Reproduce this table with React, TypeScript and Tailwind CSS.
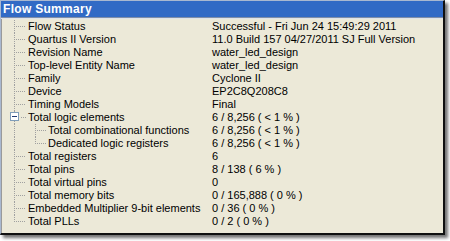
type Row = {
  label: string;
  value: string;
  level: 0 | 1;
  expander?: boolean;
  last?: boolean;
  childLast?: boolean;
};

const rows: Row[] = [
  { label: "Flow Status", value: "Successful - Fri Jun 24 15:49:29 2011", level: 0 },
  { label: "Quartus II Version", value: "11.0 Build 157 04/27/2011 SJ Full Version", level: 0 },
  { label: "Revision Name", value: "water_led_design", level: 0 },
  { label: "Top-level Entity Name", value: "water_led_design", level: 0 },
  { label: "Family", value: "Cyclone II", level: 0 },
  { label: "Device", value: "EP2C8Q208C8", level: 0 },
  { label: "Timing Models", value: "Final", level: 0 },
  { label: "Total logic elements", value: "6 / 8,256 ( < 1 % )", level: 0, expander: true },
  { label: "Total combinational functions", value: "6 / 8,256 ( < 1 % )", level: 1 },
  { label: "Dedicated logic registers", value: "6 / 8,256 ( < 1 % )", level: 1, childLast: true },
  { label: "Total registers", value: "6", level: 0 },
  { label: "Total pins", value: "8 / 138 ( 6 % )", level: 0 },
  { label: "Total virtual pins", value: "0", level: 0 },
  { label: "Total memory bits", value: "0 / 165,888 ( 0 % )", level: 0 },
  { label: "Embedded Multiplier 9-bit elements", value: "0 / 36 ( 0 % )", level: 0 },
  { label: "Total PLLs", value: "0 / 2 ( 0 % )", level: 0, last: true },
];

const DOT = "#a0a0a0";

// dotted tree connectors for one 13px row
function TreeGutter({ row }: { row: Row }) {
  const width = row.level === 0 ? 25 : 45;
  return (
    <svg width={width} height={13} className="shrink-0" shapeRendering="crispEdges">
      {/* main trunk */}
      {Array.from({ length: 7 }).map((_, i) => {
        const y = i * 2;
        if (row.last && y > 6) return null;
        return <rect key={"t" + i} x={12} y={y} width={1} height={1} fill={DOT} />;
      })}
      {row.level === 0 && !row.expander &&
        Array.from({ length: 5 }).map((_, i) => (
          <rect key={"h" + i} x={14 + i * 2} y={6} width={1} height={1} fill={DOT} />
        ))}
      {row.expander && (
        <>
          <rect x={8.5} y={1.5} width={8} height={8} fill="#ffffff" stroke="#7f9db9" />
          <rect x={10} y={5} width={5} height={1} fill="#1f3a73" />
          <rect x={19} y={6} width={1} height={1} fill={DOT} />
          <rect x={21} y={6} width={1} height={1} fill={DOT} />
          <rect x={23} y={6} width={1} height={1} fill={DOT} />
          {Array.from({ length: 2 }).map((_, i) => (
            <rect key={"e" + i} x={33} y={10 + i * 2} width={1} height={1} fill={DOT} />
          ))}
        </>
      )}
      {row.level === 1 && (
        <>
          {Array.from({ length: 7 }).map((_, i) => {
            const y = i * 2;
            if (row.childLast && y > 6) return null;
            return <rect key={"c" + i} x={33} y={y} width={1} height={1} fill={DOT} />;
          })}
          {Array.from({ length: 5 }).map((_, i) => (
            <rect key={"ch" + i} x={35 + i * 2} y={6} width={1} height={1} fill={DOT} />
          ))}
        </>
      )}
    </svg>
  );
}

export default function App() {
  return (
    <div className="w-[450px] h-[241px] bg-white" style={{ fontFamily: '"Liberation Sans", Arial, sans-serif' }}>
      <div className="w-[445px] h-[235px] flex flex-col border-l border-t border-[#a9b8d0] border-r-2 border-b-2 border-r-[#111] border-b-[#111] shadow-[3px_3px_3px_rgba(0,0,0,0.55)]">
        <div className="h-[16px] bg-[#316ac5] text-white font-bold text-[12px] leading-[16px] pl-[2px] tracking-[0.3px]">
          Flow Summary
        </div>
        <div className="h-[1px] bg-[#7f8ea8]" />
        <div className="h-[1px] bg-[#dfe3ea]" />
        <div className="flex-1 bg-[#ece9d8] border-l border-[#9a9a9a] pt-[1px]">
          {rows.map((row) => (
            <div key={row.label} className="grid grid-cols-[210px_1fr] h-[13px] items-center text-[11px] leading-[13px] text-black">
              <div className="flex items-center">
                <TreeGutter row={row} />
                <div className="whitespace-nowrap pl-[1px]">{row.label}</div>
              </div>
              <div className="whitespace-nowrap">{row.value}</div>
            </div>
          ))}
        </div>
      </div>
    </div>
  );
}
